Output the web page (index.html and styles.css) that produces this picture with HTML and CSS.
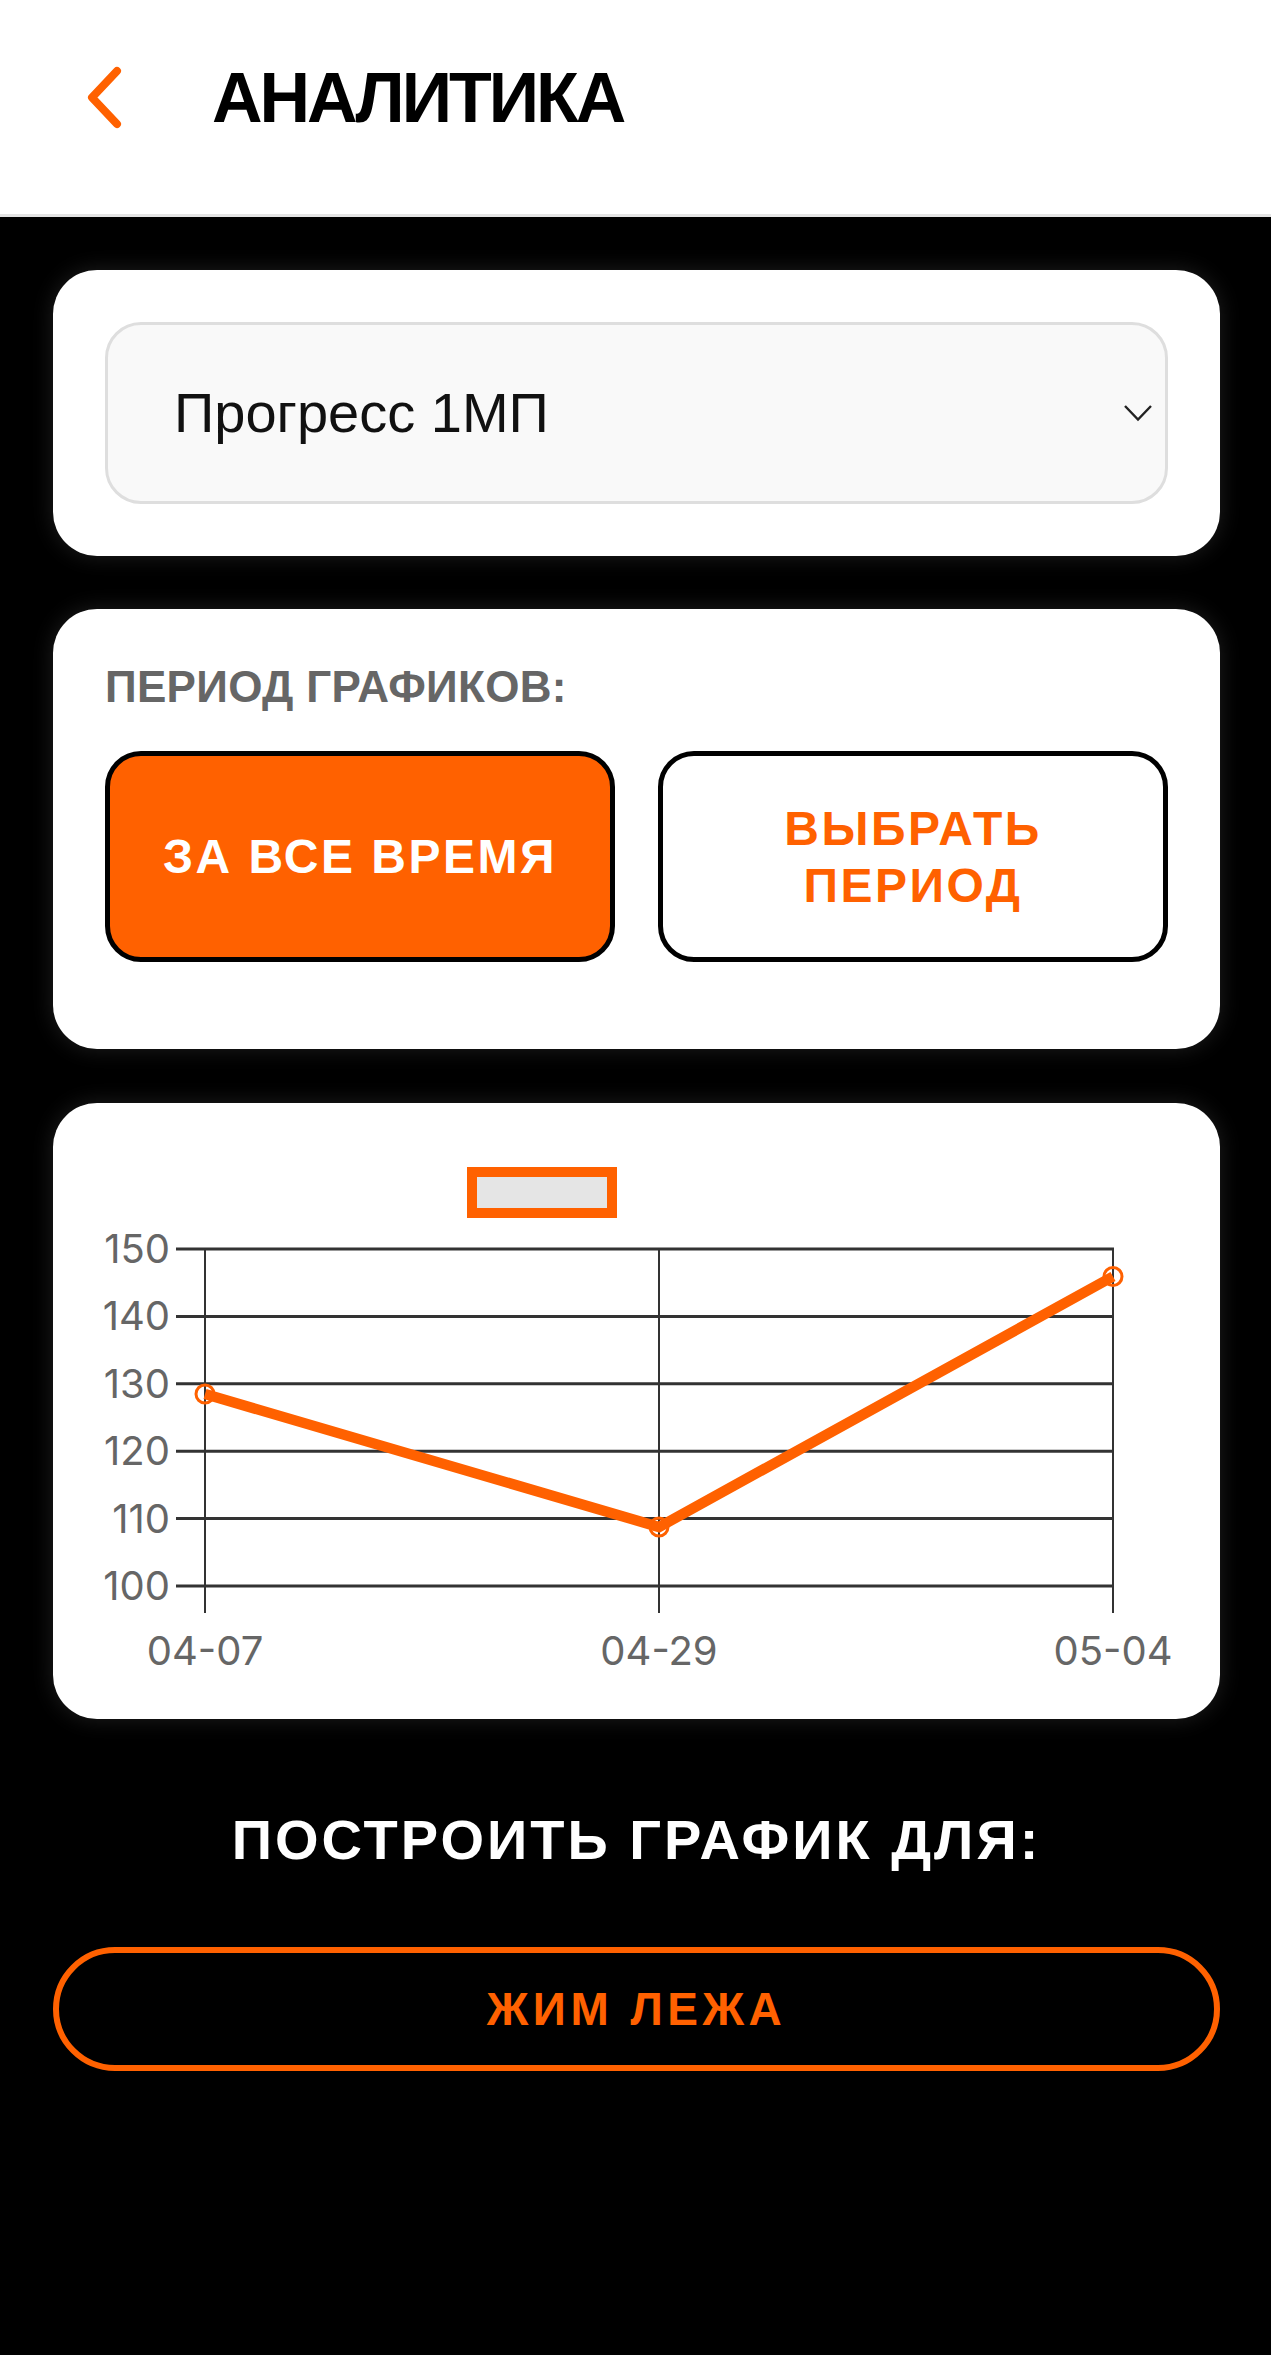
FILE: index.html
```html
<!DOCTYPE html>
<html lang="ru">
<head>
<meta charset="utf-8">
<title>Аналитика</title>
<link rel="stylesheet" href="styles.css">
</head>
<body>
<header class="topbar">
  <svg class="back" viewBox="0 0 42 68" width="42" height="68" aria-hidden="true">
    <path d="M33 7 L8 33.5 L33 60" fill="none" stroke="#FF6100" stroke-width="8" stroke-linecap="round" stroke-linejoin="round"/>
  </svg>
  <h1 class="title">АНАЛИТИКА</h1>
</header>
<main class="content">
  <section class="card card-select">
    <div class="select">
      <span class="select-text">Прогресс 1МП</span>
      <svg class="select-arrow" viewBox="0 0 30 18" width="30" height="18" aria-hidden="true">
        <path d="M2 2 L15 15.5 L28 2" fill="none" stroke="#222" stroke-width="2.4"/>
      </svg>
    </div>
  </section>

  <section class="card card-period">
    <div class="label">ПЕРИОД ГРАФИКОВ:</div>
    <div class="period-buttons">
      <button class="btn btn-active">ЗА ВСЕ ВРЕМЯ</button>
      <button class="btn btn-outline">ВЫБРАТЬ<br>ПЕРИОД</button>
    </div>
  </section>

  <section class="card card-chart">
    <svg class="chart" viewBox="0 0 1167 616" width="1167" height="616">
      <rect x="419" y="69" width="140" height="41" fill="#e5e5e5" stroke="#FF6100" stroke-width="10"/>
      <g stroke="#333" stroke-width="3">
        <line x1="123" y1="146" x2="1061" y2="146"/>
        <line x1="123" y1="213.4" x2="1061" y2="213.4"/>
        <line x1="123" y1="280.8" x2="1061" y2="280.8"/>
        <line x1="123" y1="348.2" x2="1061" y2="348.2"/>
        <line x1="123" y1="415.6" x2="1061" y2="415.6"/>
        <line x1="123" y1="483" x2="1061" y2="483"/>
      </g>
      <g stroke="#333" stroke-width="2">
        <line x1="152" y1="145" x2="152" y2="510"/>
        <line x1="606" y1="145" x2="606" y2="510"/>
        <line x1="1060" y1="145" x2="1060" y2="510"/>
      </g>
      <g class="tick-y" text-anchor="end">
        <text x="117" y="160">150</text>
        <text x="117" y="227.4">140</text>
        <text x="117" y="294.8">130</text>
        <text x="117" y="362.2">120</text>
        <text x="117" y="429.6">110</text>
        <text x="117" y="497">100</text>
      </g>
      <g class="tick-x" text-anchor="middle">
        <text x="152" y="562">04-07</text>
        <text x="606" y="562">04-29</text>
        <text x="1060" y="562">05-04</text>
      </g>
      <polyline points="152,291 606,424 1060,173.5" fill="none" stroke="#FF6100" stroke-width="10.5" stroke-linejoin="miter"/>
      <g fill="none" stroke="#FF6100" stroke-width="3">
        <circle cx="152" cy="291" r="9"/>
        <circle cx="606" cy="424" r="9"/>
        <circle cx="1060" cy="173.5" r="9"/>
      </g>
    </svg>
  </section>

  <h2 class="build-title">ПОСТРОИТЬ ГРАФИК ДЛЯ:</h2>
  <button class="exercise">ЖИМ ЛЕЖА</button>
</main>
</body>
</html>
```

FILE: styles.css
```css
html, body {
  margin: 0;
  padding: 0;
}

body {
  background: #000;
  font-family: "Liberation Sans", Arial, sans-serif;
  min-height: 2355px;
}

.topbar {
  height: 196px;
  padding-bottom: 18px;
  background: #fff;
  border-bottom: 3px solid #e4e4e4;
  display: flex;
  align-items: center;
}

.back {
  flex: none;
  margin-left: 84px;
}

.title {
  margin: 0 0 0 86px;
  font-size: 70px;
  font-weight: 700;
  line-height: 1;
  letter-spacing: -3px;
  color: #000;
}

.content {
  padding: 53px 51px 0 53px;
  display: flex;
  flex-direction: column;
}

.card {
  background: #fff;
  border-radius: 44px;
  box-shadow: 0 0 22px rgba(255, 255, 255, 0.12);
}

.card-select {
  padding: 52px;
}

.select {
  height: 182px;
  box-sizing: border-box;
  border: 3px solid #dedede;
  border-radius: 36px;
  background: #f9f9f9;
  display: flex;
  align-items: center;
  justify-content: space-between;
  padding: 0 12px 0 66px;
}

.select-text {
  font-size: 56px;
  color: #111;
  line-height: 1;
}

.select-arrow {
  flex: none;
}

.card-period {
  margin-top: 53px;
  padding: 54px 52px 87px;
}

.label {
  font-size: 44px;
  line-height: 48px;
  font-weight: 700;
  color: #666;
  letter-spacing: 0.3px;
}

.period-buttons {
  margin-top: 40px;
  display: grid;
  grid-template-columns: 1fr 1fr;
  gap: 43px;
}

.btn {
  height: 211px;
  box-sizing: border-box;
  border: 5px solid #000;
  border-radius: 36px;
  font-family: "Liberation Sans", Arial, sans-serif;
  font-size: 48px;
  line-height: 57px;
  font-weight: 700;
  letter-spacing: 2.5px;
  padding: 0;
  margin: 0;
  cursor: pointer;
}

.btn-active {
  background: #FF6100;
  color: #fff;
}

.btn-outline {
  background: #fff;
  color: #FF6100;
}

.card-chart {
  margin-top: 54px;
  height: 616px;
  overflow: hidden;
}

.chart {
  display: block;
  width: 100%;
  height: 100%;
}

.tick-y text,
.tick-x text {
  font-family: Inter, "Liberation Sans", Arial, sans-serif;
  font-size: 40px;
  font-weight: 400;
  fill: #666;
}

.build-title {
  margin: 89px 0 0;
  text-align: center;
  font-size: 56px;
  line-height: 64px;
  font-weight: 700;
  letter-spacing: 3px;
  color: #fff;
}

.exercise {
  margin-top: 75px;
  height: 124px;
  box-sizing: border-box;
  border: 6px solid #FF6100;
  border-radius: 62px;
  background: #000;
  color: #FF6100;
  font-family: "Liberation Sans", Arial, sans-serif;
  font-size: 46px;
  font-weight: 700;
  letter-spacing: 4.5px;
  padding: 0;
  cursor: pointer;
}
```
